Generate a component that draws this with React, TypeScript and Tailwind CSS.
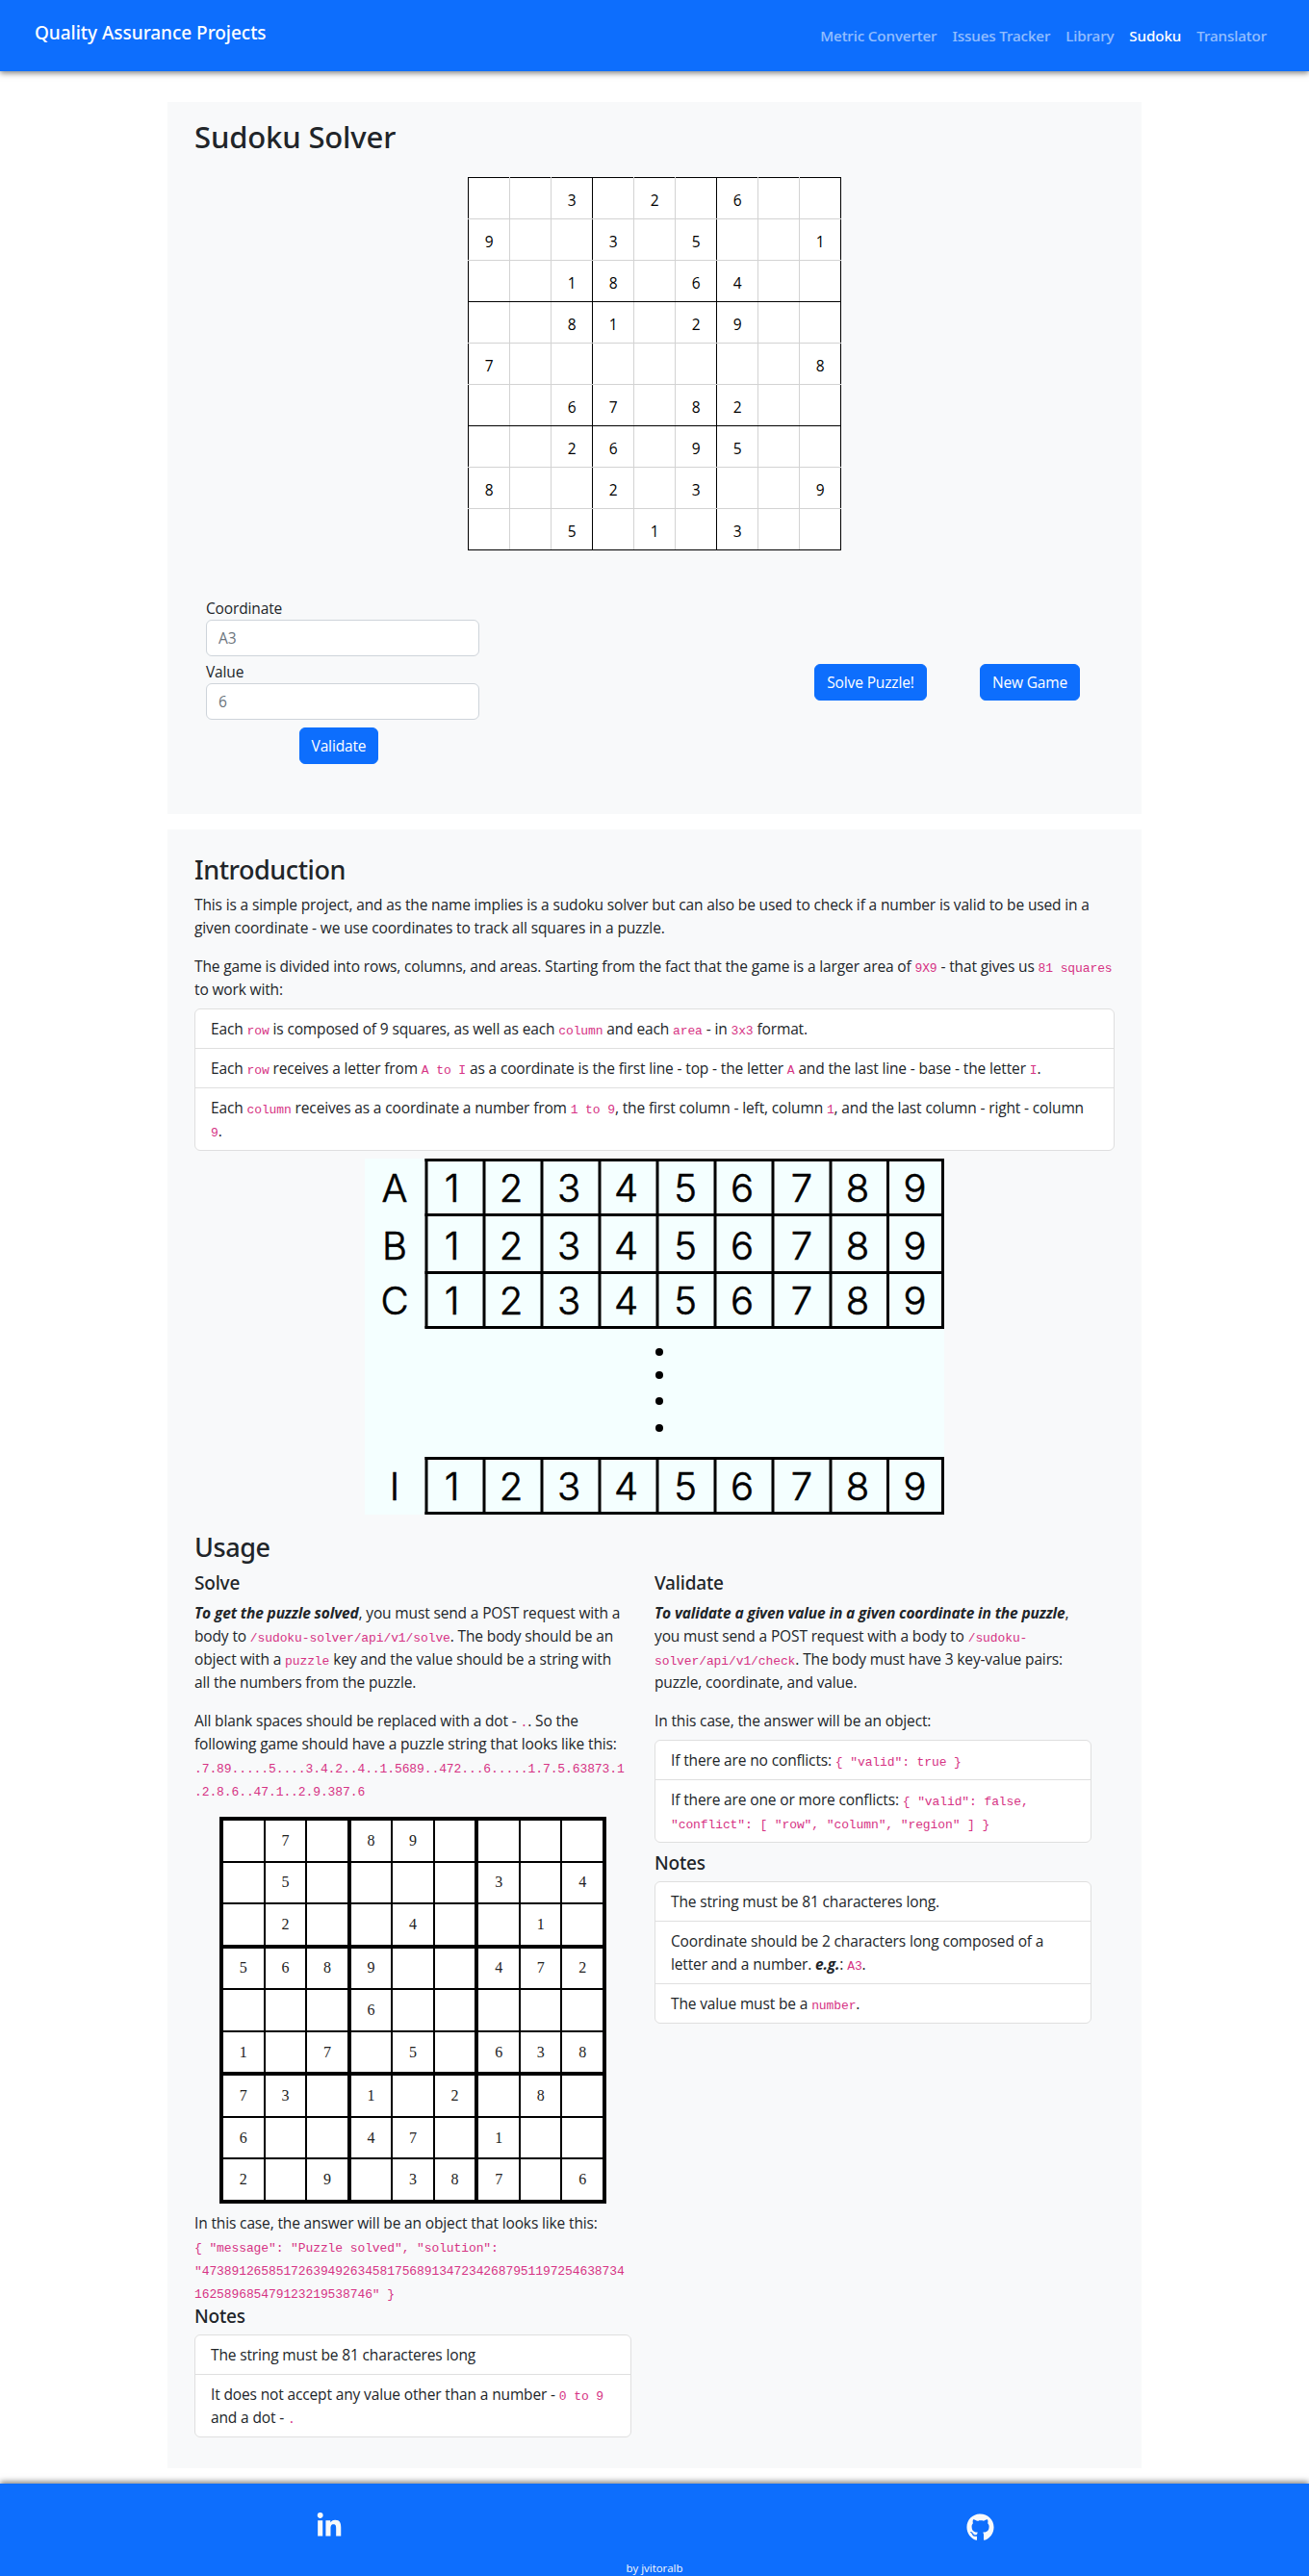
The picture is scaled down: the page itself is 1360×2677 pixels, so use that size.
import type { ReactNode } from "react";
import { FaGithub, FaLinkedinIn } from "react-icons/fa";

const BOARD = [
  "..3.2.6..",
  "9..3.5..1",
  "..18.64..",
  "..81.29..",
  "7.......8",
  "..67.82..",
  "..26.95..",
  "8..2.3..9",
  "..5.1.3..",
];

const EXAMPLE = [
  ".7.89....",
  ".5....3.4",
  ".2..4..1.",
  "5689..472",
  "...6.....",
  "1.7.5.638",
  "73.1.2.8.",
  "6..47.1..",
  "2.9.387.6",
];

const NAV = ["Metric Converter", "Issues Tracker", "Library", "Sudoku", "Translator"];

function Code({ children }: { children: ReactNode }) {
  return (
    <code className="font-['Liberation_Mono',monospace] text-[13px] leading-none tracking-[-0.1px] text-[#d63384]">
      {children}
    </code>
  );
}

function Heading({ children }: { children: ReactNode }) {
  return (
    <h2 className="mb-2 h-[34px] font-['Noto_Sans',sans-serif] text-[27px] leading-[36px] font-medium tracking-[-0.43px]">
      {children}
    </h2>
  );
}

function SubHeading({ children }: { children: ReactNode }) {
  return (
    <h3 className="mb-2 h-6 font-['Noto_Sans',sans-serif] text-[19px] leading-[26px] font-medium tracking-[-0.2px]">
      {children}
    </h3>
  );
}

function List({ items }: { items: ReactNode[] }) {
  return (
    <ul className="divide-y divide-[#dfdfdf] rounded-md border border-[#dfdfdf] bg-white">
      {items.map((item, i) => (
        <li key={i} className="px-4 py-2">
          {item}
        </li>
      ))}
    </ul>
  );
}

function Button({ children, className }: { children: ReactNode; className: string }) {
  return (
    <button
      className={`${className} h-[38px] rounded-md border border-[#0d6efd] bg-[#0d6efd] whitespace-nowrap text-white`}
    >
      {children}
    </button>
  );
}

function Field({ label, placeholder }: { label: string; placeholder: string }) {
  return (
    <label className="flex flex-col">
      <span>{label}</span>
      <input
        placeholder={placeholder}
        className="h-[38px] w-[284px] rounded-md border border-[#ced4da] bg-white px-3 placeholder:text-[#6c757d]"
      />
    </label>
  );
}

function Board() {
  return (
    <table className="mx-auto w-[388px] border-collapse bg-white text-black">
      <tbody>
        {BOARD.map((row, r) => (
          <tr key={r} className="h-[43px]">
            {row.split("").map((cell, c) => (
              <td
                key={c}
                className={[
                  "w-[43px] border px-0 pt-[3px] pb-0 text-center leading-6",
                  c % 3 === 0 ? "border-l-black" : "border-l-[#d3d3d3]",
                  c % 3 === 2 ? "border-r-black" : "border-r-[#d3d3d3]",
                  r % 3 === 0 ? "border-t-black" : "border-t-[#d3d3d3]",
                  r % 3 === 2 ? "border-b-black" : "border-b-[#d3d3d3]",
                ].join(" ")}
              >
                {cell === "." ? "" : cell}
              </td>
            ))}
          </tr>
        ))}
      </tbody>
    </table>
  );
}

function ExampleBoard() {
  return (
    <div className="mx-auto grid size-[402px] grid-cols-3 grid-rows-3 gap-1 bg-black p-1 font-['Liberation_Serif',serif] text-[16px] text-[#222]">
      {[0, 1, 2].map((br) =>
        [0, 1, 2].map((bc) => (
          <div key={`${br}${bc}`} className="grid grid-cols-3 grid-rows-3 gap-0.5">
            {[0, 1, 2].map((r) =>
              [0, 1, 2].map((c) => {
                const cell = EXAMPLE[br * 3 + r][bc * 3 + c];
                return (
                  <div key={`${r}${c}`} className="flex items-center justify-center bg-white leading-5">
                    {cell === "." ? "" : cell}
                  </div>
                );
              }),
            )}
          </div>
        )),
      )}
    </div>
  );
}

/* Diagram of the coordinate system: lettered rows with numbered columns. */
function CoordinateDiagram() {
  const columns = [64, 124, 184, 244, 304, 364, 424, 484, 543.5, 600.5];
  const centers = [90.5, 152, 212, 271.5, 333, 392, 454, 512, 571.5];
  const rows = [
    { letter: "A", baseline: 45 },
    { letter: "B", baseline: 105 },
    { letter: "C", baseline: 162 },
    { letter: "I", baseline: 355 },
  ];
  return (
    <svg
      viewBox="0 0 602 370"
      className="mx-auto block h-[370px] w-[602px] bg-[#f4ffff] font-['Inter',sans-serif] text-[40px] font-light tracking-normal"
      textAnchor="middle"
    >
      <g stroke="#000" strokeWidth="3">
        {columns.map((x) => (
          <path key={x} d={`M${x} 0V176.5M${x} 310V370`} />
        ))}
        {[1.5, 58.5, 118.5, 175.5, 311.5, 368.5].map((y) => (
          <path key={y} d={`M62.5 ${y}H602`} />
        ))}
      </g>
      {rows.map(({ letter, baseline }) => (
        <g key={letter} stroke="#000" strokeWidth="0.6">
          <text x="31" y={baseline}>
            {letter}
          </text>
          {centers.map((x, i) => (
            <text key={x} x={x} y={baseline}>
              {i + 1}
            </text>
          ))}
        </g>
      ))}
      {[201, 225, 252, 280].map((cy) => (
        <circle key={cy} cx="306" cy={cy} r="4" />
      ))}
    </svg>
  );
}

export default function App() {
  return (
    <div className="flex h-[2677px] w-[1360px] flex-col bg-white font-['Open_Sans',sans-serif] text-[15.5px] leading-6 tracking-[-0.14px] text-[#212529]">
      <header className="flex h-[74px] shrink-0 items-start justify-between bg-[#0d6efd] px-9 font-['Noto_Sans',sans-serif] font-medium shadow-[0_2px_6px_rgba(0,0,0,0.5)]">
        <span className="mt-[18px] text-[19px] leading-8 tracking-[-0.03px] text-white">
          Quality Assurance Projects
        </span>
        <nav className="mt-[25px] mr-2 flex gap-4 text-[15.2px] leading-6 tracking-[-0.11px]">
          {NAV.map((item) => (
            <a key={item} className={item === "Sudoku" ? "text-white" : "text-white/55"}>
              {item}
            </a>
          ))}
        </nav>
      </header>

      <main className="mx-auto mt-8 flex w-[1012px] flex-col gap-4">
        <section className="h-[740px] bg-[#f8f9fa] px-7 pt-4">
          <h1 className="mb-[23px] h-[39px] font-['Noto_Sans',sans-serif] text-[31px] leading-[41px] font-medium tracking-[-0.15px]">
            Sudoku Solver
          </h1>
          <Board />
          <div className="mt-12 flex justify-between px-3">
            <form className="flex w-[284px] flex-col gap-1">
              <Field label="Coordinate" placeholder="A3" />
              <Field label="Value" placeholder="6" />
              <div className="mt-1 flex justify-center pr-2">
                <Button className="w-[82px]">Validate</Button>
              </div>
            </form>
            <div className="mr-6 flex items-center gap-[55px] pt-1">
              <Button className="w-[117px]">Solve Puzzle!</Button>
              <Button className="w-[104px]">New Game</Button>
            </div>
          </div>
        </section>

        <section className="h-[1703px] bg-[#f8f9fa] px-7 pt-6">
          <Heading>Introduction</Heading>
          <p className="mb-4 whitespace-nowrap">
            This is a simple project, and as the name implies is a sudoku solver but can also be used to check if a
            number is valid to be used in a<br />
            given coordinate - we use coordinates to track all squares in a puzzle.
          </p>
          <p className="mb-2 whitespace-nowrap">
            The game is divided into rows, columns, and areas. Starting from the fact that the game is a larger area of{" "}
            <Code>9X9</Code> - that gives us <Code>81 squares</Code>
            <br />
            to work with:
          </p>
          <List
            items={[
              <>
                Each <Code>row</Code> is composed of 9 squares, as well as each <Code>column</Code> and each{" "}
                <Code>area</Code> - in <Code>3x3</Code> format.
              </>,
              <>
                Each <Code>row</Code> receives a letter from <Code>A to I</Code> as a coordinate is the first line - top
                - the letter <Code>A</Code> and the last line - base - the letter <Code>I</Code>.
              </>,
              <>
                Each <Code>column</Code> receives as a coordinate a number from <Code>1 to 9</Code>, the first column -
                left, column <Code>1</Code>, and the last column - right - column
                <br />
                <Code>9</Code>.
              </>,
            ]}
          />
          <div className="mt-2 mb-4">
            <CoordinateDiagram />
          </div>
          <Heading>Usage</Heading>
          <div className="grid grid-cols-2">
            <div className="pr-6 whitespace-nowrap">
              <SubHeading>Solve</SubHeading>
              <p className="mb-4">
                <b>
                  <i>To get the puzzle solved</i>
                </b>
                , you must send a POST request with a<br />
                body to <Code>/sudoku-solver/api/v1/solve</Code>. The body should be an
                <br />
                object with a <Code>puzzle</Code> key and the value should be a string with
                <br />
                all the numbers from the puzzle.
              </p>
              <p className="mb-4">
                All blank spaces should be replaced with a dot - <Code>.</Code>. So the
                <br />
                following game should have a puzzle string that looks like this:
                <br />
                <Code>.7.89.....5....3.4.2..4..1.5689..472...6.....1.7.5.63873.1</Code>
                <br />
                <Code>.2.8.6..47.1..2.9.387.6</Code>
              </p>
              <ExampleBoard />
              <p className="mt-2">
                In this case, the answer will be an object that looks like this:
                <br />
                <Code>{'{ "message": "Puzzle solved", "solution":'}</Code>
                <br />
                <Code>{'"473891265851726394926345817568913472342687951197254638734'}</Code>
                <br />
                <Code>{'162589685479123219538746" }'}</Code>
              </p>
              <SubHeading>Notes</SubHeading>
              <List
                items={[
                  "The string must be 81 characteres long",
                  <>
                    It does not accept any value other than a number - <Code>0 to 9</Code>
                    <br />
                    and a dot - <Code>.</Code>
                  </>,
                ]}
              />
            </div>
            <div className="pr-6 whitespace-nowrap">
              <SubHeading>Validate</SubHeading>
              <p className="mb-4">
                <b>
                  <i>To validate a given value in a given coordinate in the puzzle</i>
                </b>
                ,<br />
                you must send a POST request with a body to <Code>/sudoku-</Code>
                <br />
                <Code>solver/api/v1/check</Code>. The body must have 3 key-value pairs:
                <br />
                puzzle, coordinate, and value.
              </p>
              <p className="mb-2">In this case, the answer will be an object:</p>
              <List
                items={[
                  <>
                    If there are no conflicts: <Code>{'{ "valid": true }'}</Code>
                  </>,
                  <>
                    If there are one or more conflicts: <Code>{'{ "valid": false,'}</Code>
                    <br />
                    <Code>{'"conflict": [ "row", "column", "region" ] }'}</Code>
                  </>,
                ]}
              />
              <div className="mt-2">
                <SubHeading>Notes</SubHeading>
              </div>
              <List
                items={[
                  "The string must be 81 characteres long.",
                  <>
                    Coordinate should be 2 characters long composed of a<br />
                    letter and a number.{" "}
                    <b>
                      <i>e.g.</i>
                    </b>
                    : <Code>A3</Code>.
                  </>,
                  <>
                    The value must be a <Code>number</Code>.
                  </>,
                ]}
              />
            </div>
          </div>
        </section>
      </main>

      <footer className="mt-4 flex h-24 shrink-0 flex-col bg-[#0d6efd] text-[#f8f9fa] shadow-[0_-2px_6px_rgba(0,0,0,0.5)]">
        <div className="mx-auto flex w-[1352px] pt-[30px]">
          <a className="flex w-1/2 justify-center">
            <FaLinkedinIn className="size-7" />
          </a>
          <a className="flex w-1/2 justify-center pt-px">
            <FaGithub className="size-[29px]" />
          </a>
        </div>
        <p className="mt-auto h-[18px] text-center text-[11.4px] leading-[20px] tracking-normal">by jvitoralb</p>
      </footer>
    </div>
  );
}
